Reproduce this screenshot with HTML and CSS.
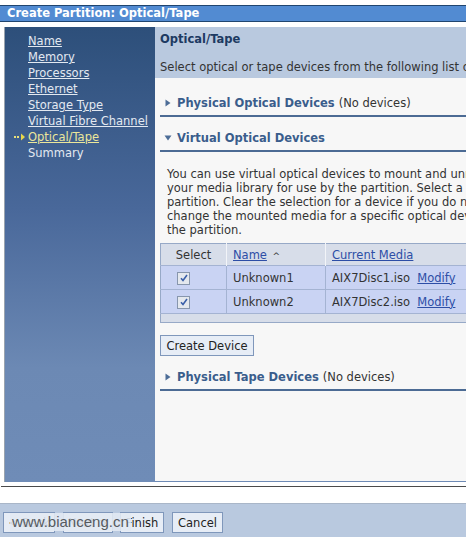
FILE: index.html
```html
<!DOCTYPE html>
<html>
<head>
<meta charset="utf-8">
<link rel="stylesheet" href="styles.css">
</head>
<body>
<div class="titlebar">Create Partition: Optical/Tape</div>
<div class="main">
  <nav class="nav">
    <a class="nav-link" href="#">Name</a>
    <a class="nav-link" href="#">Memory</a>
    <a class="nav-link" href="#">Processors</a>
    <a class="nav-link" href="#">Ethernet</a>
    <a class="nav-link" href="#">Storage Type</a>
    <a class="nav-link" href="#">Virtual Fibre Channel</a>
    <div class="nav-current">
      <svg class="nav-arrow" width="12" height="8" viewBox="0 0 12 8"><rect x="0" y="3" width="2" height="2" fill="#e8e07a"/><rect x="3" y="3" width="2" height="2" fill="#e8e07a"/><path d="M7 0.5 L11 4 L7 7.5 Z" fill="#e8d84a"/></svg>
      <a class="nav-link current" href="#">Optical/Tape</a>
    </div>
    <span class="nav-text">Summary</span>
  </nav>
  <div class="content">
    <div class="page-head">
      <h1 class="page-title">Optical/Tape</h1>
      <p class="page-desc">Select optical or tape devices from the following list or create new devices.</p>
    </div>
    <div class="section-head">
      <svg class="tri" width="6" height="8" viewBox="0 0 6 8"><path d="M0.5 0.5 L5.5 4 L0.5 7.5 Z" fill="#4d6d97"/></svg>
      <span class="section-title">Physical Optical Devices</span> <span class="section-note">(No devices)</span>
    </div>
    <div class="section-head second">
      <svg class="tri" width="8" height="6" viewBox="0 0 8 6"><path d="M0.5 0.5 L7.5 0.5 L4 5.5 Z" fill="#4d6d97"/></svg>
      <span class="section-title">Virtual Optical Devices</span>
    </div>
    <p class="intro">You can use virtual optical devices to mount and unmount<br>your media library for use by the partition. Select a device<br>partition. Clear the selection for a device if you do not<br>change the mounted media for a specific optical device<br>the partition.</p>
    <table class="devices">
      <thead>
        <tr>
          <th class="c-sel">Select</th>
          <th class="c-name"><a href="#">Name</a> <span class="sort">^</span></th>
          <th class="c-media"><a href="#">Current Media</a></th>
        </tr>
      </thead>
      <tbody>
        <tr>
          <td class="c-sel"><span class="check"><svg width="8" height="8" viewBox="0 0 8 8"><path d="M1 4.2 L3 6.5 L7 1" fill="none" stroke="#3a5fa8" stroke-width="1.6"/></svg></span></td>
          <td class="c-name">Unknown1</td>
          <td class="c-media">AIX7Disc1.iso&nbsp; <a href="#">Modify</a></td>
        </tr>
        <tr>
          <td class="c-sel"><span class="check"><svg width="8" height="8" viewBox="0 0 8 8"><path d="M1 4.2 L3 6.5 L7 1" fill="none" stroke="#3a5fa8" stroke-width="1.6"/></svg></span></td>
          <td class="c-name">Unknown2</td>
          <td class="c-media">AIX7Disc2.iso&nbsp; <a href="#">Modify</a></td>
        </tr>
        <tr class="foot"><td colspan="3"></td></tr>
      </tbody>
    </table>
    <button class="btn create">Create Device</button>
    <div class="section-head third">
      <svg class="tri" width="6" height="8" viewBox="0 0 6 8"><path d="M0.5 0.5 L5.5 4 L0.5 7.5 Z" fill="#4d6d97"/></svg>
      <span class="section-title">Physical Tape Devices</span> <span class="section-note">(No devices)</span>
    </div>
  </div>
</div>
<div class="rule"></div>
<div class="footer">
  <button class="btn b-back">&lt; Back</button>
  <button class="btn b-next">Next &gt;</button>
  <button class="btn b-finish">Finish</button>
  <button class="btn b-cancel">Cancel</button>
  <span class="watermark">www.bianceng.cn</span>
</div>
</body>
</html>
```
FILE: styles.css
```css
* { box-sizing: border-box; }
html, body { margin: 0; padding: 0; }
body {
  width: 466px;
  height: 537px;
  overflow: hidden;
  background: #ffffff;
  font-family: "DejaVu Sans", Verdana, sans-serif;
  font-size: 11.5px;
  color: #333333;
}
.titlebar {
  margin-top: 5px;
  height: 17px;
  background: #528bd2;
  border-top: 1px solid #20456f;
  border-bottom: 1px solid #20456f;
  color: #ffffff;
  font-weight: bold;
  font-size: 11.5px;
  line-height: 15px;
  padding-left: 7px;
  white-space: nowrap;
}
.main {
  display: flex;
  margin-top: 5px;
  margin-left: 4px;
  height: 455px;
  border-left: 1px solid #9aa3ae;
}
.nav {
  width: 150px;
  flex: none;
  display: flex;
  flex-direction: column;
  padding: 6px 0 0 23px;
  background: linear-gradient(#2d4f7a 0%, #49689a 40%, #6c89b4 75%, #6f8cb7 100%);
}
.nav-link, .nav-text {
  display: block;
  line-height: 16px;
  color: #e3e9f1;
  white-space: nowrap;
}
.nav-link { text-decoration: underline; }
.nav-current {
  display: flex;
  align-items: center;
  margin-left: -14px;
  line-height: 16px;
}
.nav-arrow { margin-right: 2px; }
.nav-link.current { color: #ece79a; }
.content {
  flex: 1;
  min-width: 0;
  overflow: hidden;
  background: #f7f7f7;
  border-bottom: 1px solid #6d8ab5;
}
.page-head {
  background: #b9c9df;
  padding: 4px 0 3px 5px;
  white-space: nowrap;
}
.page-title {
  margin: 0;
  font-size: 11.5px;
  line-height: 16px;
  color: #1d3a62;
}
.page-desc {
  margin: 12px 0 0 0;
  line-height: 16px;
}
.section-head {
  margin: 17px 0 0 5px;
  width: 330px;
  padding: 0 0 4px 5px;
  border-bottom: 2px solid #4c6b94;
  line-height: 16px;
  white-space: nowrap;
  display: flex;
  align-items: center;
}
.section-head.second { margin-top: 13px; }
.section-head.third { margin-top: 13px; }
.tri { margin-right: 6px; flex: none; }
.section-head.second .tri { margin-left: -1px; margin-right: 5px; }
.section-title {
  font-weight: bold;
  font-size: 11.5px;
  color: #3a5d8c;
  margin-right: 4px;
}
.section-note { color: #333333; }
.intro {
  margin: 15px 0 0 12px;
  line-height: 14px;
  white-space: nowrap;
}
.devices {
  margin: 6px 0 0 5px;
  width: 340px;
  border-collapse: collapse;
  border: 1px solid #97a9c7;
  font-size: 11.5px;
}
.devices th {
  background: #d7dde9;
  font-weight: normal;
  height: 22px;
  border-left: 1px solid #f2f4f8;
  text-align: left;
  padding: 0 6px;
}
.devices th:first-child { border-left: none; text-align: center; }
.devices td {
  background: #c9d3f3;
  height: 24px;
  border-top: 1px solid #a4b3d2;
  border-left: 1px solid #a4b3d2;
  padding: 0 6px;
  white-space: nowrap;
}
.devices td:first-child { border-left: none; }
.devices .foot td { background: #d7dde9; height: 9px; padding: 0; }
.c-sel { width: 66px; }
.c-name { width: 99px; }
.devices a { color: #2d4ea6; text-decoration: underline; }
.sort { font-size: 9px; margin-left: 2px; }
.check {
  display: inline-flex;
  align-items: center;
  justify-content: center;
  width: 13px;
  height: 13px;
  margin-left: 10px;
  border: 1px solid #8796ad;
  background: #e4e8ee;
  vertical-align: middle;
}
.btn {
  font-family: "DejaVu Sans", Verdana, sans-serif;
  font-size: 11.5px;
  color: #222222;
  background: #e7edf6;
  border: 1px solid #7f97bb;
  height: 21px;
  padding: 0 4px;
  white-space: nowrap;
}
.create {
  display: block;
  margin: 12px 0 0 5px;
  width: 94px;
}
.rule {
  margin: 4px 0 0 1px;
  border-top: 1px solid #4a4a4a;
  height: 17px;
}
.footer {
  position: relative;
  height: 34px;
  background: #b9c9df;
  border-top: 1px solid #a9b6c8;
  padding: 8px 0 0 3px;
  display: flex;
  align-items: flex-start;
}
.footer .btn { height: 21px; margin-right: 8px; }
.b-back { width: 52px; }
.b-next { width: 50px; margin-right: 7px !important; }
.b-finish { width: 44px; }
.b-cancel { width: 51px; }
.watermark {
  position: absolute;
  left: 10px;
  top: 9px;
  padding: 0 2px;
  font-family: "Liberation Sans", Arial, sans-serif;
  font-size: 15px;
  line-height: 18px;
  color: #555a60;
  background: rgba(226, 233, 243, 0.9);
}
```
